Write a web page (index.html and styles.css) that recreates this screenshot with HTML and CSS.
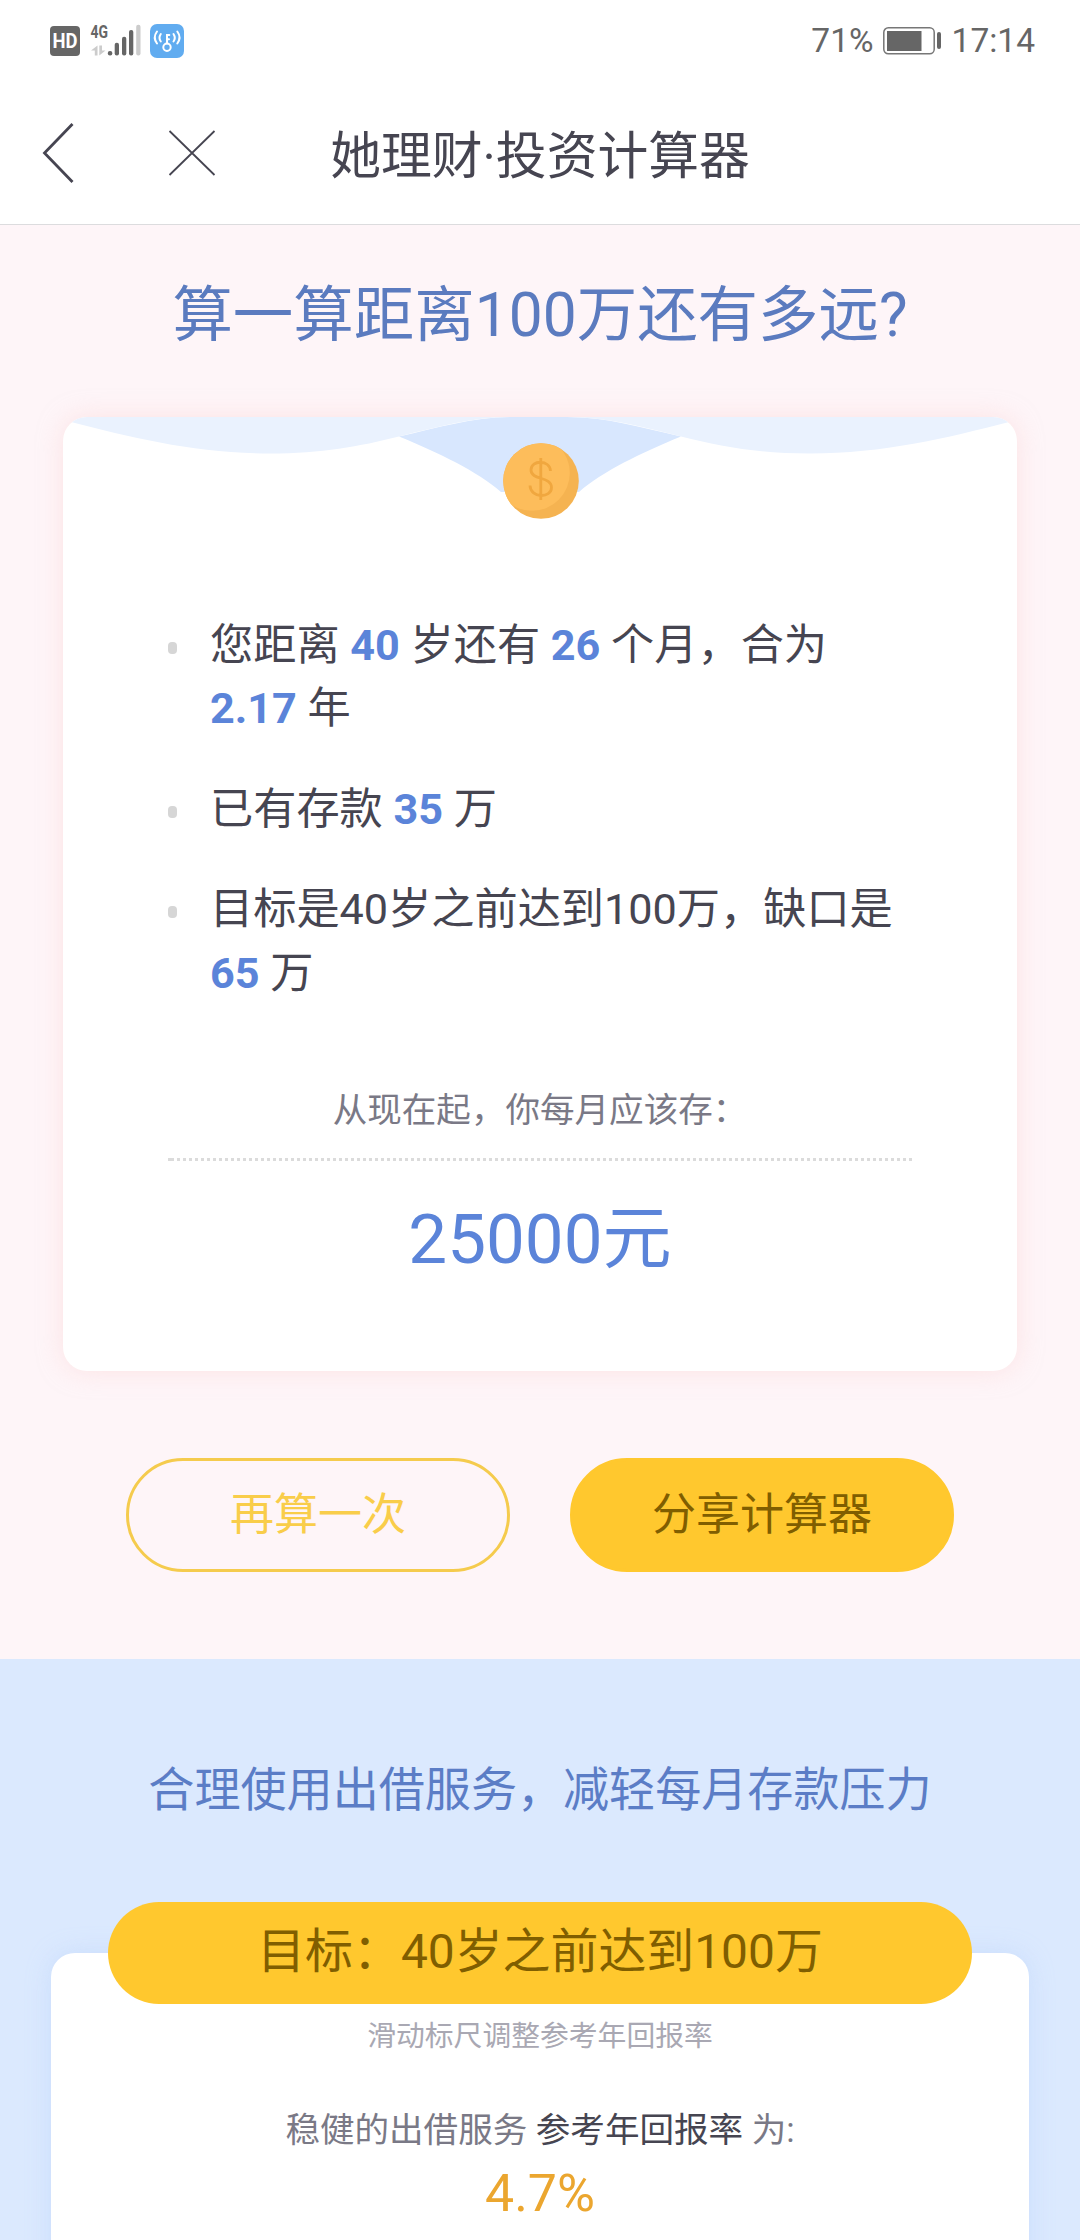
FILE: index.html
```html
<!DOCTYPE html>
<html lang="zh-CN">
<head>
<meta charset="utf-8">
<title>她理财·投资计算器</title>
<link rel="stylesheet" href="styles.css">
</head>
<body>
<div class="status">
  <svg class="status-left" width="150" height="44" viewBox="0 0 150 44" aria-hidden="true">
    <rect x="0" y="6" width="30" height="30" rx="4" fill="#666"/>
    <text x="2.600" y="28" textLength="25" lengthAdjust="spacingAndGlyphs" font-size="20" font-weight="700" fill="#fff">HD</text>
    <text x="40.5" y="18" textLength="17.5" lengthAdjust="spacingAndGlyphs" font-size="19" font-weight="700" fill="#666">4G</text>
    <path d="M41 30.500L47.500 25.500V35.500H44.800V30.500ZM49.300 25.500H52V30.500H55.500L49.300 35.500Z" fill="#ccc"/>
    <rect x="57.800" y="31" width="4.500" height="4.500" rx="2" fill="#666"/>
    <rect x="64.700" y="22.700" width="4.300" height="12.800" rx="2" fill="#666"/>
    <rect x="72" y="16.700" width="4.300" height="18.800" rx="2" fill="#666"/>
    <rect x="79" y="10" width="4.300" height="25.500" rx="2" fill="#666"/>
    <rect x="86.200" y="4.700" width="4.300" height="30.800" rx="2" fill="#ccc"/>
    <rect x="100" y="4" width="34" height="34" rx="7" fill="#61acf0"/>
    <g fill="none" stroke="#fff" stroke-width="2" stroke-linecap="round">
      <circle cx="117" cy="27.300" r="3.700"/>
      <path d="M117 23.500v-8.500h2.300M117 19.300h2"/>
      <path d="M110.800 14q-2.600 4 0 7.500M107 11.500q-4.500 6 0 12M123.500 14q2.600 4 0 7.500M127.300 11.500q4.500 6 0 12"/>
    </g>
  </svg>
  <div class="status-right">
    <span class="percent">71%</span>
    <svg width="60" height="28" viewBox="0 0 60 28" aria-hidden="true">
      <rect x=".8" y=".8" width="50.400" height="26" rx="4.500" fill="#fff" stroke="#777" stroke-width="1.500"/>
      <rect x="4" y="4" width="34.500" height="20" fill="#666"/>
      <rect x="54" y="5" width="4" height="17" rx="2" fill="#666"/>
    </svg>
    <span class="clock">17:14</span>
  </div>
</div>
<header class="nav">
  <svg class="nav-icons" width="216" height="70" viewBox="0 0 216 70" fill="none" stroke="#464551" aria-hidden="true">
    <path d="M72.500 6L44.500 35l28 29" stroke-width="2.800"/>
    <path d="M169.500 13l45 44M214.500 13l-45 44" stroke-width="1.800"/>
  </svg>
  <h1 class="nav-title">她理财·投资计算器</h1>
</header>
<main>
  <section class="result">
    <h2 class="result-title">算一算距离100万还有多远?</h2>
    <div class="card">
      <svg class="card-top" width="954" height="110" viewBox="0 0 954 110" aria-hidden="true">
        <path d="M336 19.500C376 10.500 410 0 450 0H504C544 0 578 10.500 618 19.500C578 36 540 54 516 75H438C414 54 376 36 336 19.500Z" fill="#d8e7fe"/>
        <path d="M0 0L8 5C70 21 134 36.500 207 36.500C259 36.500 296 29.500 336 19.500C376 9.500 410 0 450 0ZM954 0L946 5C884 21 820 36.500 747 36.500C695 36.500 658 29.500 618 19.500C578 9.500 544 0 504 0Z" fill="#eaf2fe"/>
        <clipPath id="coin"><circle cx="478" cy="64" r="37.800"/></clipPath>
        <circle cx="478" cy="64" r="37.800" fill="#f5b351"/>
        <circle cx="469" cy="56" r="37.800" fill="#fdbd5b" clip-path="url(#coin)"/>
        <path d="M487.500 54C487 42.500 468 42.500 468 53C468 63.500 488.500 59 488.500 70.500C488.500 81.500 467.500 81.500 467 68.500M477.800 41V83" fill="none" stroke="#f0a73f" stroke-width="2.800"/>
      </svg>
      <ul class="facts">
        <li>您距离 <b>40</b> 岁还有 <b>26</b> 个月，合为<br><b>2.17</b> 年</li>
        <li>已有存款 <b>35</b> 万</li>
        <li>目标是40岁之前达到100万，缺口是<br><b>65</b> 万</li>
      </ul>
      <p class="save-label">从现在起，你每月应该存：</p>
      <div class="dots"></div>
      <p class="amount">25000元</p>
    </div>
    <div class="actions">
      <button class="btn btn-outline">再算一次</button>
      <button class="btn btn-fill">分享计算器</button>
    </div>
  </section>
  <section class="plan">
    <h2 class="plan-title">合理使用出借服务，减轻每月存款压力</h2>
    <div class="plan-card">
      <div class="goal">目标：40岁之前达到100万</div>
      <p class="hint">滑动标尺调整参考年回报率</p>
      <p class="rate-label">稳健的出借服务 <span>参考年回报率</span> 为:</p>
      <p class="rate">4.7%</p>
    </div>
  </section>
</main>
</body>
</html>
```
FILE: styles.css
```css
* { box-sizing: border-box; margin: 0; padding: 0; }
body {
  width: 1080px;
  height: 2240px;
  overflow: hidden;
  display: flex;
  flex-direction: column;
  background: #fff;
  color: #464551;
  font-family: Roboto, "Noto Sans CJK SC", sans-serif;
}
h1, h2 { font-weight: 400; }

.status {
  height: 82px;
  padding: 20px 45px 0 50px;
  display: flex;
  justify-content: space-between;
  align-items: flex-start;
}
.status-right {
  display: flex;
  align-items: center;
  height: 42px;
  color: #666;
  font-size: 33.5px;
  line-height: 42px;
}
.percent { margin-right: 9px; }
.clock { margin-left: 9px; }

.nav {
  height: 143px;
  display: grid;
  grid-template-columns: 216px 1fr 216px;
  border-bottom: 1px solid #dcdcde;
}
.nav-icons { margin-top: 36px; }
.nav-title {
  margin-top: 40px;
  font-size: 50.8px;
  line-height: 70px;
  text-align: center;
}

.result {
  height: 1434px;
  padding: 46px 63px 0;
  background: #fef5f8;
}
.result-title {
  color: #5b7bbf;
  font-size: 60.48px;
  line-height: 90px;
  text-align: center;
}
.card {
  height: 954px;
  margin-top: 56px;
  border-radius: 24px;
  background: #fff;
  box-shadow: 0 0 24px rgba(252, 210, 210, .5);
}
.card-top {
  display: block;
  border-radius: 24px 24px 0 0;
}
.facts {
  padding: 87px 60px 0 105px;
  list-style: none;
  font-size: 43.2px;
  line-height: 63.4px;
}
.facts li {
  position: relative;
  padding-left: 42px;
  margin-bottom: 37px;
}
.facts li:last-child { margin-bottom: 0; }
.facts li::before {
  content: "";
  position: absolute;
  left: 0;
  top: 28px;
  width: 9px;
  height: 12px;
  border-radius: 4px;
  background: #d6d6d6;
}
.facts b { color: #5b84d9; font-weight: 700; }
.save-label {
  margin-top: 80px;
  color: #7a7986;
  font-size: 34.56px;
  line-height: 50px;
  text-align: center;
}
.dots {
  height: 3px;
  margin: 23px 105px 0;
  border-left: 3px solid #dbdbdb;
  background: repeating-linear-gradient(90deg, #dbdbdb 0 3px, transparent 3px 6px);
}
.amount {
  margin-top: 34px;
  color: #5b84d9;
  font-size: 69.12px;
  line-height: 90px;
  text-align: center;
}
.actions {
  display: flex;
  gap: 60px;
  padding: 87px 63px 0;
}
.btn {
  width: 384px;
  height: 114px;
  border: 3px solid #ffc82e;
  border-radius: 57px;
  font: inherit;
  font-size: 44px;
  line-height: 108px;
}
.btn-outline { background: transparent; border-color: #f5cb4d; color: #f9cd4a; }
.btn-fill { background: #ffc82e; color: #805e00; }

.plan {
  height: 581px;
  padding: 96px 51px 0;
  background: #dbe9fe;
}
.plan-title {
  color: #5b7dc6;
  font-size: 46.08px;
  line-height: 70px;
  text-align: center;
}
.plan-card {
  height: 330px;
  margin-top: 128px;
  border-radius: 24px;
  background: #fff;
  box-shadow: 0 0 24px rgba(170, 200, 250, .35);
  text-align: center;
  display: flow-root;
}
.goal {
  height: 102px;
  margin: -51px 57px 0;
  border-radius: 51px;
  background: #ffc82e;
  color: #805e00;
  font-size: 47.9px;
  line-height: 100px;
}
.hint {
  margin-top: 12px;
  color: #a9a8b3;
  font-size: 28.8px;
  line-height: 40px;
}
.rate-label {
  margin-top: 49px;
  color: #7a7986;
  font-size: 34.56px;
  line-height: 50px;
}
.rate-label span { color: #464551; }
.rate {
  margin-top: 9px;
  color: #eba62f;
  font-size: 51.84px;
  line-height: 60px;
}
```
